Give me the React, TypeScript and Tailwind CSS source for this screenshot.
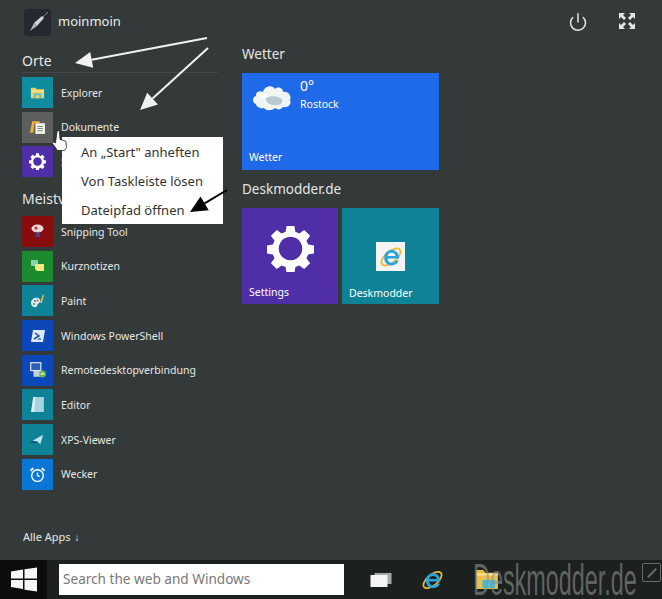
import { Power } from "lucide-react"

const FONT = "font-['Noto_Sans','Open_Sans',sans-serif]"

function ExplorerIcon() {
  return (
    <svg viewBox="0 0 16 16" className="h-[15px] w-[15px]">
      <path d="M1 3h5l1 1.5h8V14H1z" fill="#f6cf5a" />
      <path d="M1 6h14v1H1z" fill="#fbeeb0" />
      <rect x="4" y="9" width="8" height="5" fill="#4cc3d9" />
      <rect x="6" y="11" width="4" height="3" fill="#f6cf5a" />
    </svg>
  )
}

function DocsIcon() {
  return (
    <svg viewBox="0 0 16 16" className="h-[17px] w-[17px]">
      <path d="M3 2h7v2H5l-1 9H1z" fill="#f2b632" />
      <rect x="6" y="4" width="9" height="10" fill="#f4f4ee" />
      <path d="M8 7h5M8 9h5M8 11h5" stroke="#7a8a70" strokeWidth="1" />
    </svg>
  )
}

function Gear({ size }: { size: string }) {
  return (
    <svg viewBox="0 0 48 48" className={size}>
      <path
        fill="#fff"
        fillRule="evenodd"
        d="M20 1h8l1 6 4 1.700 5-3.700 6 6-3.700 5 1.700 4 6 1v8l-6 1-1.700 4 3.700 5-6 6-5-3.700-4 1.700-1 6h-8l-1-6-4-1.700-5 3.700-6-6 3.700-5-1.700-4-6-1v-8l6-1 1.700-4-3.700-5 6-6 5 3.700 4-1.700z M24 12a12 12 0 1 0 .01 0z"
      />
    </svg>
  )
}

function SnipIcon() {
  return (
    <svg viewBox="0 0 16 16" className="h-[16px] w-[16px]">
      <ellipse cx="7.500" cy="5.500" rx="6" ry="4" fill="#f1d8d8" />
      <circle cx="6" cy="5" r="1.600" fill="#c9332f" />
      <path d="M6 9l4 5M10 9l-4 5" stroke="#3c4e9a" strokeWidth="1.600" />
    </svg>
  )
}

function NotesIcon() {
  return (
    <svg viewBox="0 0 16 16" className="h-[16px] w-[16px]">
      <path d="M1 2h7v6H1z" fill="#8fd0b0" />
      <path d="M5 6h9v7H7l-2-2z" fill="#f4e87c" />
    </svg>
  )
}

function PaintIcon() {
  return (
    <svg viewBox="0 0 16 16" className="h-[16px] w-[16px]">
      <path d="M1 10c0-4 4-6 7-5s3 4 1 5-1 3-3 4-5-1-5-4z" fill="#dfe8ee" />
      <circle cx="5" cy="8" r="1" fill="#3a78c0" />
      <circle cx="7.500" cy="7.500" r="1" fill="#d65a3a" />
      <circle cx="4" cy="11" r="1" fill="#4f9e4a" />
      <path d="M13 1l1 1-2 8h-2z" fill="#eab44a" />
    </svg>
  )
}

function ShellIcon() {
  return (
    <svg viewBox="0 0 16 16" className="h-[16px] w-[16px]">
      <path d="M3 2h12l-2 12H1z" fill="#dbe9f6" />
      <path d="M5 5l4 3-5 3" fill="none" stroke="#1c4f9c" strokeWidth="1.500" />
      <path d="M8 11h3" stroke="#1c4f9c" strokeWidth="1.200" />
    </svg>
  )
}

function RemoteIcon() {
  return (
    <svg viewBox="0 0 16 16" className="h-[18px] w-[18px]">
      <rect x="1" y="1" width="10" height="8" fill="#e8eef5" />
      <rect x="2" y="2" width="8" height="6" fill="#2b5fb8" />
      <rect x="4" y="9" width="9" height="5" fill="#c9d1d8" />
      <circle cx="12" cy="11.500" r="3" fill="#6abf4b" />
      <path d="M10.500 11.500h3" stroke="#fff" strokeWidth="1" />
    </svg>
  )
}

function EditorIcon() {
  return (
    <svg viewBox="0 0 16 16" className="h-[17px] w-[17px]">
      <path d="M4 1h10v14H2z" fill="#a5d3e0" />
      <path d="M4 1h2l-1 14H2z" fill="#d9edf2" />
    </svg>
  )
}

function XpsIcon() {
  return (
    <svg viewBox="0 0 16 16" className="h-[15px] w-[15px]">
      <path d="M14 3L7 7 3 9l5 1 3 3z" fill="#bfe6f0" />
      <path d="M1 11h6" stroke="#12384c" strokeWidth="1" />
    </svg>
  )
}

function AlarmIcon() {
  return (
    <svg viewBox="0 0 16 16" className="h-[17px] w-[17px]" fill="none" stroke="#fff" strokeWidth="1.300">
      <circle cx="8" cy="9" r="5.500" />
      <path d="M8 6v3l2 1" />
      <path d="M1.500 4.500L4 2M14.500 4.500L12 2" strokeWidth="1.800" />
    </svg>
  )
}

function ExpandIcon() {
  return (
    <svg viewBox="0 0 18 18" className="h-[18px] w-[18px]" fill="#e4e6e5">
      <path d="M1 1h6L5 3l3 3-2 2-3-3-2 2z" />
      <path d="M17 1h-6l2 2-3 3 2 2 3-3 2 2z" />
      <path d="M1 17h6l-2-2 3-3-2-2-3 3-2-2z" />
      <path d="M17 17h-6l2-2-3-3 2-2 3 3 2-2z" />
    </svg>
  )
}

function IeLetter({ size }: { size: string }) {
  return (
    <svg viewBox="0 0 24 24" className={size}>
      <ellipse cx="12" cy="12" rx="11.500" ry="5.500" transform="rotate(-40 12 12)" fill="none" stroke="#e9b93a" strokeWidth="1.800" />
      <path
        d="M20 13.500H8.500c.2 2.800 2 4.300 4.300 4.300 1.700 0 3-.8 3.700-2.200h3.300c-1 3-3.800 4.900-7.200 4.900-4.300 0-7.400-3.100-7.400-7.500S8.200 5 12.600 5C16.900 5 20 8 20 12.500zM8.600 11h7.900c-.2-2.100-1.700-3.300-3.900-3.300-2.100 0-3.600 1.200-4 3.300z"
        fill="#2aa4dc"
      />
    </svg>
  )
}

function Cloud() {
  return (
    <svg viewBox="0 0 40 28" className="h-[28px] w-[40px]">
      <path
        d="M4 21c-4-1-4-7 0-8-1-4 4-6 7-4 1-6 9-8 12-3 3-3 8-1 8 3 5-1 9 4 7 8 2 4-2 8-7 7-2 3-6 3-8 1-3 3-9 3-11 0-3 1-8-1-8-4z"
        fill="#f2f5f6"
      />
      <path d="M14 15c5-3 12-2 16 1 2 3-2 7-6 6-4 1-11-2-10-7z" fill="#b9cbd0" />
      <path d="M8 13c3-2 6-2 8 0-2 2-6 2-8 0z" fill="#ffffff" />
    </svg>
  )
}

function Arrow({ x1, y1, x2, y2, color = "#f2f2f2" }: { x1: number; y1: number; x2: number; y2: number; color?: string }) {
  const a = Math.atan2(y2 - y1, x2 - x1)
  const len = 17
  const hw = 8
  const bx = x2 - len * Math.cos(a)
  const by = y2 - len * Math.sin(a)
  const px = -Math.sin(a) * hw
  const py = Math.cos(a) * hw
  return (
    <>
      <line x1={x1} y1={y1} x2={bx} y2={by} stroke={color} strokeWidth="2" />
      <polygon points={`${x2},${y2} ${bx + px},${by + py} ${bx - px},${by - py}`} fill={color} />
    </>
  )
}

const places = [
  { name: "Explorer", bg: "bg-[#0f8c9f]", icon: <ExplorerIcon /> },
  { name: "Dokumente", bg: "bg-[#5d5f5e]", icon: <DocsIcon /> },
  { name: "Settings", bg: "bg-[#4f2ea8]", icon: <Gear size="h-[17px] w-[17px]" /> },
]

const apps = [
  { name: "Snipping Tool", bg: "bg-[#870c0c]", icon: <SnipIcon /> },
  { name: "Kurznotizen", bg: "bg-[#1c8a2e]", icon: <NotesIcon /> },
  { name: "Paint", bg: "bg-[#0e8296]", icon: <PaintIcon /> },
  { name: "Windows PowerShell", bg: "bg-[#0c48b8]", icon: <ShellIcon /> },
  { name: "Remotedesktopverbindung", bg: "bg-[#0c48b8]", icon: <RemoteIcon /> },
  { name: "Editor", bg: "bg-[#0e8296]", icon: <EditorIcon /> },
  { name: "XPS-Viewer", bg: "bg-[#0e8296]", icon: <XpsIcon /> },
  { name: "Wecker", bg: "bg-[#0a76d6]", icon: <AlarmIcon /> },
]

function AppRow({ name, bg, icon }: { name: string; bg: string; icon: React.ReactNode }) {
  return (
    <div className="flex h-[31px] items-center gap-2">
      <div className={`flex h-[31px] w-[31px] shrink-0 items-center justify-center ${bg}`}>{icon}</div>
      <span className="pt-[2px] text-[10.5px] text-[#e6e8e7]">{name}</span>
    </div>
  )
}

export default function App() {
  return (
    <div className={`relative flex h-[599px] w-[662px] flex-col overflow-hidden bg-[#343a39] ${FONT}`}>
      <div className="flex h-[560px] shrink-0">
        {/* Left column */}
        <div className="flex w-[242px] shrink-0 flex-col pl-[22px] pr-[24px]">
          <div className="flex h-[44px] shrink-0 items-center gap-[7px] pl-[2px]">
            <div className="flex h-[27px] w-[27px] items-center justify-center rounded-sm bg-[#252830]">
              <svg viewBox="0 0 24 24" className="h-[24px] w-[24px]">
                <path d="M16 8L22 2" stroke="#8a8d90" strokeWidth="1" />
                <path d="M16 6l2 2-7 8-3-3z" fill="#d4d5d6" />
                <path d="M8 13l3 3-7 5z" fill="#b5b6b8" />
              </svg>
            </div>
            <span className="text-[13px] text-[#e8eaea]">moinmoin</span>
          </div>
          <div className="flex h-[29px] shrink-0 items-end border-b border-[#444a49] pb-[1px] text-[14px] leading-[20px] text-[#e4e6e5]">
            Orte
          </div>
          <div className="mt-[4px] flex flex-col gap-[3.7px]">
            {places.map((p) => (
              <AppRow key={p.name} {...p} />
            ))}
          </div>
          <div className="mt-[11px] flex h-[21px] shrink-0 items-center text-[14px] text-[#e4e6e5]">Meistverwendet</div>
          <div className="mt-[6.6px] flex flex-col gap-[3.7px]">
            {apps.map((p) => (
              <AppRow key={p.name} {...p} />
            ))}
          </div>
          <div className="mt-[39px] flex items-center gap-1 pl-px text-[11px] text-[#e6e8e7]">
            Alle Apps <span className="text-[10px]">↓</span>
          </div>
        </div>

        {/* Tiles */}
        <div className="flex w-[197px] shrink-0 flex-col pt-[44px]">
          <div className="h-[20px] text-[13.5px] leading-[20px] text-[#e4e6e5]">Wetter</div>
          <div className="mt-[9px] flex h-[97px] w-[197px] flex-col justify-between bg-[#1f6ae8] pb-[6px] pl-[7px] text-white">
            <div className="flex pl-[3px] pt-[4px]">
              <div className="pt-[6px]">
                <Cloud />
              </div>
              <div className="ml-[8px] flex flex-col">
                <span className="text-[14px] leading-[18px]">0°</span>
                <span className="text-[10.5px] leading-[18px]">Rostock</span>
              </div>
            </div>
            <span className="text-[10.5px] leading-[14px]">Wetter</span>
          </div>
          <div className="mt-[9px] h-[20px] text-[13.5px] leading-[20px] text-[#e4e6e5]">Deskmodder.de</div>
          <div className="mt-[9px] flex gap-[4px]">
            <div className="flex h-[96px] w-[96px] flex-col items-center bg-[#4f2ea8] pt-[17px] text-white">
              <Gear size="h-[47px] w-[47px]" />
              <span className="mt-[13px] w-full pl-[7px] text-[10.5px] leading-[14px]">Settings</span>
            </div>
            <div className="flex h-[96px] w-[97px] flex-col items-center bg-[#0e8296] pt-[34px] text-white">
              <div className="flex h-[29px] w-[29px] items-center justify-center bg-[#f4f5f2]">
                <IeLetter size="h-[24px] w-[24px]" />
              </div>
              <span className="mt-[15px] w-full pl-[7px] text-[10.5px] leading-[14px]">Deskmodder</span>
            </div>
          </div>
        </div>

        {/* Power and resize */}
        <div className="flex flex-1 items-start justify-end gap-[30px] pr-[26px] pt-[12px]">
          <Power className="h-[20px] w-[20px] text-[#e4e6e5]" strokeWidth={1.8} />
          <ExpandIcon />
        </div>
      </div>

      {/* Taskbar */}
      <div className="flex h-[39px] shrink-0 items-center bg-[#1c201f]">
        <div className="flex h-full w-[47px] shrink-0 items-center justify-center bg-[#0b0d0c]">
          <svg viewBox="0 0 26 24" className="h-[25px] w-[26px]" fill="#f4f5f5">
            <path d="M0 4l12-2v9H0zM13.500 1.700L26 0v11H13.500zM0 12.500h12v9l-12-2zM13.500 12.500H26V24l-12.500-1.800z" />
          </svg>
        </div>
        <div className="ml-[12px] flex h-[31px] w-[285px] items-center bg-white pl-[4px] text-[13.6px] text-[#77797a]">
          Search the web and Windows
        </div>
        <div className="ml-[26px] flex h-[16px] w-[22px] items-center justify-center">
          <svg viewBox="0 0 21 16" className="h-[16px] w-[22px]">
            <rect x="4" y="1" width="17" height="11" fill="#a8aaa9" />
            <rect x="0" y="3" width="17" height="12" fill="#f4f5f5" />
          </svg>
        </div>
        <div className="ml-[29px] flex h-[24px] w-[23px] items-center justify-center">
          <IeLetter size="h-[24px] w-[23px]" />
        </div>
      </div>

      {/* Taskbar folder and watermark */}
      <svg viewBox="0 0 24 22" className="absolute left-[476px] top-[569px] h-[20px] w-[22px]">
        <path d="M0 1h8l2 3h14v18H0z" fill="#e9c04a" />
        <rect x="0" y="5" width="24" height="2" fill="#fbe99a" />
        <rect x="7" y="12" width="14" height="9" fill="#43bdd6" />
      </svg>
      <div className="absolute left-[473px] top-[570px] scale-y-[1.9] whitespace-nowrap font-['Liberation_Sans',sans-serif] text-[23.400px] leading-[20px] text-[#8e9391]/60">
        Deskmodder.de
      </div>
      <div className="absolute left-[642px] top-[563px] flex h-[19px] w-[19px] items-center justify-center rounded-[2px] border border-[#656a69]">
        <div className="h-[12px] w-[2px] rotate-45 bg-[#656a69]" />
      </div>

      {/* Context menu */}
      <div className="absolute left-[62px] top-[137px] flex h-[87px] w-[161px] flex-col justify-center bg-white pl-[19px] pt-[2px] text-[13px] leading-[29px] text-[#333]">
        <span>An „Start" anheften</span>
        <span>Von Taskleiste lösen</span>
        <span>Dateipfad öffnen</span>
      </div>

      {/* Annotation arrows and cursor */}
      <svg viewBox="0 0 662 599" className="pointer-events-none absolute left-0 top-0 h-[599px] w-[662px]">
        <Arrow x1={207} y1={38} x2={75} y2={63} />
        <Arrow x1={208} y1={48} x2={140} y2={110} />
        <Arrow x1={227} y1={190} x2={190} y2={212} color="#000" />
        <path
          d="M57 131.500c1-1 2-1 2.500 0l.5 8 2 .5 2 .5 2 1 .5 6-2 3h-7l-5-7c-.5-1 1-2 3-.5z"
          fill="#fff"
          stroke="#222"
          strokeWidth="0.8"
        />
      </svg>
    </div>
  )
}
